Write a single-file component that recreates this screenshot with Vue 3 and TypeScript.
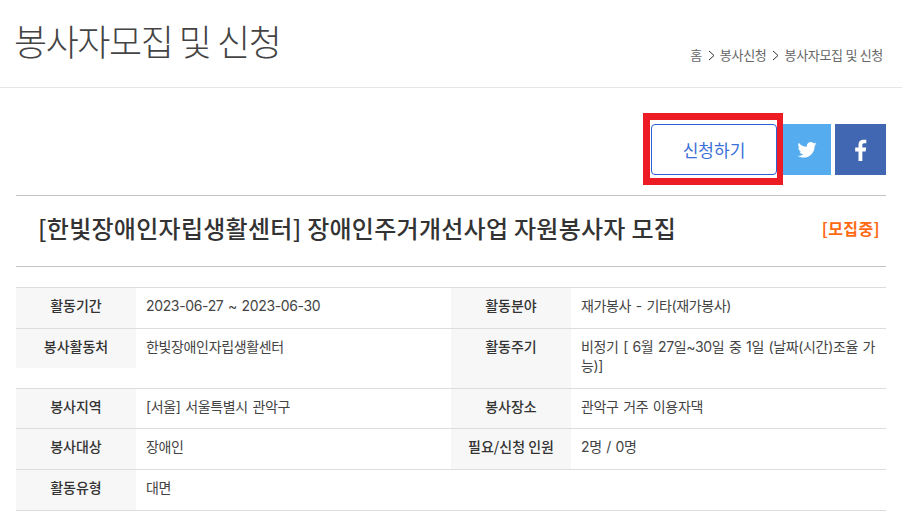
<script setup lang="ts">
interface Cell { label: string; value: string }
const rows: Cell[][] = [
  [{ label: '활동기간', value: '2023-06-27 ~ 2023-06-30' }, { label: '활동분야', value: '재가봉사 - 기타(재가봉사)' }],
  [{ label: '봉사활동처', value: '한빛장애인자립생활센터' }, { label: '활동주기', value: '비정기 [ 6월 27일~30일 중 1일 (날짜(시간)조율 가능)]' }],
  [{ label: '봉사지역', value: '[서울] 서울특별시 관악구' }, { label: '봉사장소', value: '관악구 거주 이용자댁' }],
  [{ label: '봉사대상', value: '장애인' }, { label: '필요/신청 인원', value: '2명 / 0명' }],
  [{ label: '활동유형', value: '대면' }],
]
</script>

<template>
  <div class="page">
    <header class="top">
      <h1 class="page-title">봉사자모집 및 신청</h1>
      <nav class="crumbs">
        <span>홈</span>
        <svg class="sep" width="7" height="11" viewBox="0 0 7 11"><path d="M1 1l5 4.500-5 4.500" fill="none" stroke="#333" stroke-width="1"/></svg>
        <span>봉사신청</span>
        <svg class="sep" width="7" height="11" viewBox="0 0 7 11"><path d="M1 1l5 4.500-5 4.500" fill="none" stroke="#333" stroke-width="1"/></svg>
        <span>봉사자모집 및 신청</span>
      </nav>
    </header>
    <div class="body">
      <div class="actions">
        <div class="highlight"><button class="apply">신청하기</button></div>
        <a class="share tw">
          <svg width="20" height="16" viewBox="0 0 24 20"><path fill="#fff" d="M24 2.400c-.9.400-1.800.700-2.800.800 1-.600 1.800-1.600 2.200-2.700-1 .600-2 1-3.100 1.200C19.300.700 18 0 16.600 0c-2.700 0-4.900 2.200-4.900 4.900 0 .400 0 .800.100 1.100C7.700 5.800 4.100 3.900 1.700.900c-.400.700-.700 1.600-.700 2.500 0 1.700.900 3.200 2.200 4.100-.800 0-1.600-.200-2.200-.600v.100c0 2.400 1.700 4.400 3.900 4.800-.400.100-.800.200-1.300.200-.300 0-.600 0-.900-.100.600 2 2.400 3.400 4.600 3.400-1.700 1.300-3.800 2.100-6.100 2.100-.400 0-.800 0-1.200-.100C2.200 18.700 4.800 19.500 7.500 19.500c9.100 0 14-7.500 14-14v-.600c1-.700 1.800-1.600 2.500-2.500z"/></svg>
        </a>
        <a class="share fb">
          <svg width="13" height="22" viewBox="0 0 14 24"><path fill="#fff" d="M9 24V13.500h3.600l.600-4.200H9V6.700c0-1.200.400-2 2.100-2h2.200V.900C12.900.800 11.600.700 10.200.700 7 .700 4.800 2.600 4.800 6.200v3.100H1.200v4.200h3.600V24z"/></svg>
        </a>
      </div>
      <div class="headline">
        <h2>[한빛장애인자립생활센터] 장애인주거개선사업 자원봉사자 모집</h2>
        <span class="status">[모집중]</span>
      </div>
      <div class="table">
        <div v-for="(row, i) in rows" :key="i" class="row">
          <template v-for="c in row" :key="c.label">
            <div class="th">{{ c.label }}</div>
            <div class="td">{{ c.value }}</div>
          </template>
        </div>
      </div>
    </div>
  </div>
</template>

<style scoped>
.page {
  width: 902px;
  height: 513px;
  overflow: hidden;
  background: #fff;
  font-family: "Noto Sans CJK KR", "Noto Sans", sans-serif;
  color: #444;
}
.top {
  height: 87px;
  border-bottom: 1px solid #e5e5e5;
  padding: 0 19px 0 16px;
  display: flex;
  justify-content: space-between;
  align-items: flex-start;
}
.page-title {
  margin: 15px 0 0 -2px;
  font-size: 36px;
  line-height: 50px;
  font-weight: 300;
  color: #444;
  letter-spacing: -1.45px;
}
.crumbs {
  margin-top: 45px;
  font-size: 13px;
  line-height: 20px;
  color: #666;
  display: flex;
  align-items: center;
  letter-spacing: -0.3px;
}
.sep { margin: 0 5px 0 6px; }
.body { padding: 0 16px; }
.actions {
  height: 108px;
  display: flex;
  justify-content: flex-end;
  align-items: flex-start;
  padding-top: 25px;
  box-sizing: border-box;
  border-bottom: 1px solid #c4c4c4;
}
.highlight {
  border: 7px solid #ed1c24;
  border-right-width: 6px;
  padding: 4px 0 0 1px;
  height: 72px;
  width: 140px;
  box-sizing: border-box;
}
.apply {
  width: 126px;
  height: 51px;
  background: #fff;
  border: 1px solid #2a5fd6;
  border-radius: 4px;
  color: #3b6fd8;
  font: inherit;
  font-size: 17px;
  font-weight: 400;
  padding: 0;
}
.share {
  width: 48px;
  height: 51px;
  margin-top: 11px;
  display: flex;
  align-items: center;
  justify-content: center;
}
.tw { background: #55acee; }
.fb { background: #4267b2; width: 51px; margin-left: 4px; }
.headline {
  height: 71px;
  border-bottom: 1px solid #c4c4c4;
  display: flex;
  align-items: center;
  justify-content: space-between;
  padding: 0 6px 8px 23px;
  box-sizing: border-box;
}
.headline h2 {
  margin: 0 0 0 -1px;
  font-size: 24px;
  font-weight: 500;
  color: #333;
  letter-spacing: 0.27px;
}
.status { color: #ff6a13; font-size: 16px; font-weight: 700; letter-spacing: 0.4px; margin-top: 2px; }
.table {
  margin-top: 20px;
  border-top: 1px solid #ddd;
  font-size: 14px;
  line-height: 19.6px;
}
.row {
  display: grid;
  grid-template-columns: 120px 315px 120px 315px;
  border-bottom: 1px solid #ddd;
}
.th {
  background: #f7f7f7;
  padding: 8px 0 12px;
  text-align: center;
  font-weight: 500;
  color: #333;
}
.row > .th:first-child { align-self: start; }
.td {
  padding: 8px 5px 12px 10px;
  color: #444;
  font-family: Inter, "Noto Sans CJK KR", sans-serif;
  letter-spacing: -0.35px;
  word-spacing: 1px;
}
</style>
